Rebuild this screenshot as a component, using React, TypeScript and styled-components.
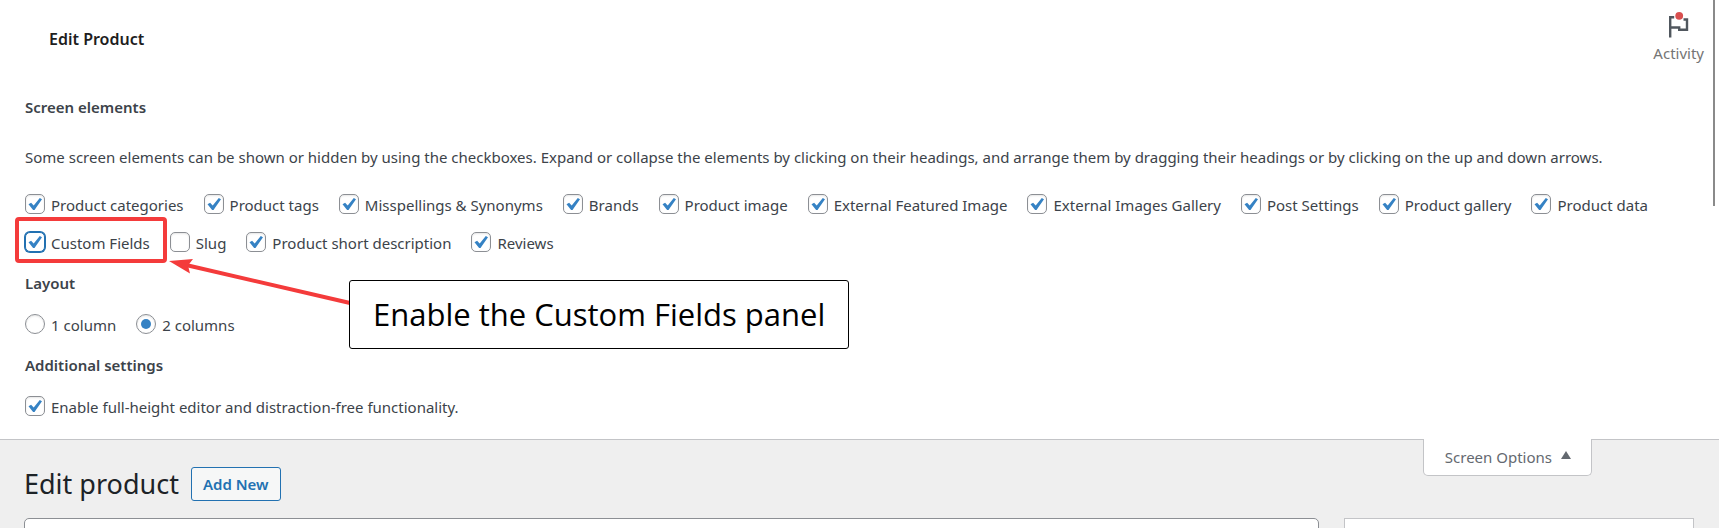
import React, { useId } from "react";
import styled, { createGlobalStyle, css } from "styled-components";

const GlobalStyle = createGlobalStyle`
  *, *::before, *::after { box-sizing: border-box; }
  body {
    margin: 0;
    background: #efefef;
    color: #3c434a;
    font: 15px/20px "Segoe UI", "Noto Sans", "Open Sans", sans-serif;
  }
  h1, h2, p { margin: 0; }
  button { font: inherit; cursor: pointer; }
`;

const Page = styled.div`
  position: relative;
  height: 100vh;
  overflow: hidden;
`;

const TopBar = styled.header`
  display: flex;
  align-items: center;
  justify-content: space-between;
  height: 77px;
  padding: 0 15px 0 49px;
  background: #fff;
`;

const TopTitle = styled.h1`
  font-size: 16px;
  line-height: 20px;
  font-weight: 600;
  color: #1e1e1e;
`;

const ActivityButton = styled.button`
  display: flex;
  flex-direction: column;
  align-items: center;
  gap: 5px;
  padding: 0 0 4px;
  border: 0;
  background: none;
  color: #757575;
`;

const ScrollThumb = styled.div`
  position: absolute;
  top: 0;
  right: 4px;
  width: 2px;
  height: 206px;
  background: #8a8a8a;
`;

const OptionsPanel = styled.form`
  position: relative;
  display: flex;
  flex-direction: column;
  padding: 20px 25px 14px;
  background: #fff;
  border-bottom: 1px solid #c3c4c7;
`;

const Legend = styled.h2`
  font-size: 15px;
  line-height: 20px;
  font-weight: 600;
`;

const SubLegend = styled(Legend)`
  margin: 12px 0;
`;

const Description = styled.p`
  padding: 30px 0 18px;
`;

const Options = styled.div<{ $gap: number }>`
  display: flex;
  flex-wrap: wrap;
  column-gap: ${(p) => p.$gap}px;
`;

const Option = styled.div`
  position: relative;
  display: flex;
  align-items: center;
  gap: 6px;
  height: 38px;

  label { padding-top: 2px; }
`;

const Control = styled.span`
  position: relative;
  display: flex;
  svg {
    position: absolute;
    inset: 0;
    pointer-events: none;
  }
  input:not(:checked) + svg { display: none; }
`;

const Field = styled.input<{ $active?: boolean }>`
  appearance: none;
  width: 20px;
  height: 20px;
  margin: 0;
  border: 1px solid #8c8f94;
  border-radius: ${(p) => (p.type === "radio" ? "50%" : "5px")};
  background: #fff;
  box-shadow: inset 0 1px 2px rgba(0, 0, 0, 0.1);
  ${(p) =>
    p.$active &&
    css`
      border-color: #2271b1;
      box-shadow: 0 0 0 1px #2271b1;
    `}
`;

const Highlight = styled.span`
  position: absolute;
  inset: -6px -17px -2px -10px;
  border: 4px solid #f43b3b;
  border-radius: 4px;
  pointer-events: none;
`;

const Arrow = styled.svg`
  position: absolute;
  left: 168px;
  top: 178px;
`;

const Callout = styled.div`
  position: absolute;
  left: 349px;
  top: 203px;
  padding: 11px 23px;
  border: 1px solid #000;
  border-radius: 3px;
  background: #fff;
  color: #000;
  font-family: "Segoe UI", "Open Sans", sans-serif;
  font-size: 31px;
  line-height: 45px;
  white-space: nowrap;
`;

const OptionsTab = styled.button`
  position: absolute;
  right: 127px;
  top: 100%;
  display: flex;
  align-items: center;
  gap: 9px;
  height: 37px;
  padding: 0 20px 0 21px;
  border: 1px solid #c3c4c7;
  border-top: 0;
  border-radius: 0 0 5px 5px;
  background: #fff;
  color: #646970;

  svg { margin-bottom: 4px; }
`;

const Content = styled.main`
  padding: 27px 25px 0 24px;
`;

const TitleRow = styled.div`
  display: flex;
  align-items: center;
  gap: 12px;
`;

const PageTitle = styled.h1`
  font-size: 27px;
  line-height: 34px;
  font-weight: 400;
  color: #1d2327;
`;

const AddButton = styled.button`
  height: 34px;
  padding: 0 11px;
  border: 1px solid #2271b1;
  border-radius: 3px;
  background: #f6f7f7;
  color: #2271b1;
  font-weight: 600;
`;

const Columns = styled.div`
  display: flex;
  gap: 25px;
  margin-top: 17px;
`;

const TitleInput = styled.input`
  flex: 1;
  min-width: 0;
  height: 48px;
  border: 1px solid #8c8f94;
  border-radius: 5px;
  background: #fff;
`;

const SideBox = styled.aside`
  width: 350px;
  height: 48px;
  border: 1px solid #c3c4c7;
  background: #fff;
`;

type ChoiceProps = {
  label: string;
  type?: "checkbox" | "radio";
  name?: string;
  checked?: boolean;
  highlighted?: boolean;
};

function Choice({ label, type = "checkbox", name, checked = true, highlighted = false }: ChoiceProps) {
  const id = useId();
  return (
    <Option>
      <Control>
        <Field id={id} type={type} name={name} defaultChecked={checked} $active={highlighted} />
        <svg width="20" height="20" viewBox="0 0 20 20" aria-hidden="true">
          {type === "radio" ? (
            <circle cx="10" cy="10" r="5" fill="#3582c4" />
          ) : (
            <path d="M3.500 10.200 6.100 8.700 8.700 11.600 14.800 4 17 5.300 9.500 16H8.100Z" fill="#3582c4" />
          )}
        </svg>
      </Control>
      <label htmlFor={id}>{label}</label>
      {highlighted && <Highlight />}
    </Option>
  );
}

const elements: ChoiceProps[] = [
  { label: "Product categories" },
  { label: "Product tags" },
  { label: "Misspellings & Synonyms" },
  { label: "Brands" },
  { label: "Product image" },
  { label: "External Featured Image" },
  { label: "External Images Gallery" },
  { label: "Post Settings" },
  { label: "Product gallery" },
  { label: "Product data" },
  { label: "Custom Fields", highlighted: true },
  { label: "Slug", checked: false },
  { label: "Product short description" },
  { label: "Reviews" },
];

export default function App() {
  return (
    <Page>
      <GlobalStyle />
      <TopBar>
        <TopTitle>Edit Product</TopTitle>
        <ActivityButton type="button">
          <svg width="24" height="28" viewBox="0 0 24 28" aria-hidden="true">
            <path d="M3.200 27.500V7.300h4M3.200 17.500h9v2.300h7.800V9.500h-3.500" fill="none" stroke="#50575e" strokeWidth="2.400" />
            <circle cx="12.200" cy="5.800" r="3.900" fill="#d94f4f" />
          </svg>
          Activity
        </ActivityButton>
      </TopBar>

      <OptionsPanel>
        <Legend>Screen elements</Legend>
        <Description>
          Some screen elements can be shown or hidden by using the checkboxes. Expand or collapse the elements by
          clicking on their headings, and arrange them by dragging their headings or by clicking on the up and down
          arrows.
        </Description>
        <Options $gap={20}>
          {elements.map((item) => (
            <Choice key={item.label} {...item} />
          ))}
        </Options>
        <SubLegend>Layout</SubLegend>
        <Options $gap={20}>
          <Choice type="radio" name="columns" label="1 column" checked={false} />
          <Choice type="radio" name="columns" label="2 columns" />
        </Options>
        <SubLegend>Additional settings</SubLegend>
        <Options $gap={20}>
          <Choice label="Enable full-height editor and distraction-free functionality." />
        </Options>
        <Arrow width="184" height="60" viewBox="0 0 184 60" aria-hidden="true">
          <path d="M18 10 182 48" stroke="#f43b3b" strokeWidth="4" />
          <path d="M1 6 25 4 20 10.500 22 18.500Z" fill="#f43b3b" />
        </Arrow>
        <Callout role="note">Enable the Custom Fields panel</Callout>
        <OptionsTab type="button">
          Screen Options
          <svg width="10" height="8" viewBox="0 0 10 8" aria-hidden="true">
            <path d="M5 0 10 8H0Z" fill="#646970" />
          </svg>
        </OptionsTab>
      </OptionsPanel>

      <Content>
        <TitleRow>
          <PageTitle>Edit product</PageTitle>
          <AddButton type="button">Add New</AddButton>
        </TitleRow>
        <Columns>
          <TitleInput type="text" aria-label="Product name" />
          <SideBox />
        </Columns>
      </Content>
      <ScrollThumb />
    </Page>
  );
}
